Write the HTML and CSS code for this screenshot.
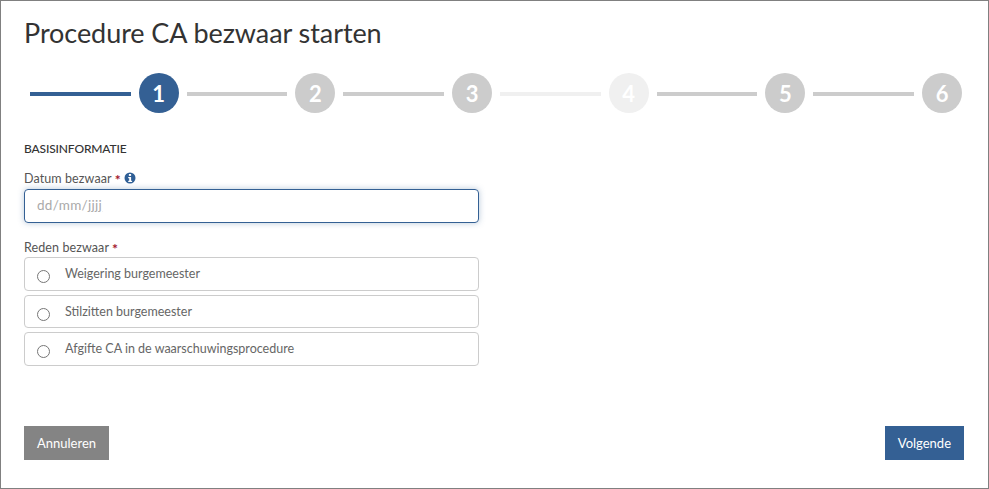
FILE: index.html
```html
<!DOCTYPE html>
<html lang="nl">
<head>
  <meta charset="UTF-8" />
  <meta name="viewport" content="width=device-width, initial-scale=1.0" />
  <title>Procedure CA bezwaar starten</title>
  <link rel="stylesheet" href="styles.css">
</head>
<body>
  <div class="modal">
    <h1 class="title">Procedure CA bezwaar starten</h1>

    <div class="steps">
      <span class="line active"></span>
      <span class="circle active">1</span>
      <span class="line"></span>
      <span class="circle">2</span>
      <span class="line"></span>
      <span class="circle">3</span>
      <span class="line faded"></span>
      <span class="circle faded">4</span>
      <span class="line"></span>
      <span class="circle">5</span>
      <span class="line"></span>
      <span class="circle">6</span>
    </div>

    <form class="form">
      <h2 class="section">BASISINFORMATIE</h2>

      <label class="label" for="datum">
        Datum bezwaar <span class="required">*</span>
        <svg class="info" viewBox="0 0 12 12" width="12" height="12" aria-hidden="true">
          <circle cx="6" cy="6" r="5.5" fill="#2f5f96"/>
          <rect x="4.9" y="2" width="2.2" height="1.9" fill="#fff"/>
          <path d="M4.2 5h2.9v3.7h1v1.2H4.2V8.7h1V6.2h-1z" fill="#fff"/>
        </svg>
      </label>
      <div class="date-input" id="datum">dd/mm/<span class="date-year">jjjj</span></div>

      <div class="label label-reason">Reden bezwaar <span class="required">*</span></div>
      <div class="options">
        <label class="option"><input type="radio" name="reden"><span>Weigering burgemeester</span></label>
        <label class="option option-short"><input type="radio" name="reden"><span>Stilzitten burgemeester</span></label>
        <label class="option"><input type="radio" name="reden"><span>Afgifte CA in de waarschuwingsprocedure</span></label>
      </div>
    </form>

    <div class="actions">
      <button type="button" class="btn btn-cancel">Annuleren</button>
      <button type="button" class="btn btn-next">Volgende</button>
    </div>
  </div>
</body>
</html>
```

FILE: styles.css
```css
* {
  box-sizing: border-box;
}
body {
  margin: 0;
  font-family: 'Lato', sans-serif;
  background: #fff;
  color: #333;
}
.modal {
  width: 989px;
  height: 489px;
  border: 1px solid #808080;
  padding: 0 24px 0 23px;
  display: flex;
  flex-direction: column;
}
.title {
  margin: 15px 0 0;
  font-size: 27px;
  line-height: 34px;
  font-weight: 400;
  letter-spacing: -0.07px;
  color: #333;
}
.steps {
  display: flex;
  align-items: center;
  gap: 8px;
  margin: 23px 2px 0 6px;
}
.line {
  flex: 1;
  height: 4px;
  margin-top: 2px;
  background: #ccc;
}
.line.active {
  background: #346094;
}
.line.faded {
  background: #f0f0f0;
}
.circle {
  width: 40px;
  height: 40px;
  flex: none;
  border-radius: 50%;
  background: #ccc;
  color: #fff;
  font-size: 22px;
  font-weight: 700;
  display: flex;
  align-items: center;
  justify-content: center;
}
.circle.active {
  background: #346094;
}
.circle.faded {
  background: #f0f0f0;
}
.form {
  width: 455px;
}
.section {
  margin: 28px 0 0;
  font-size: 12px;
  line-height: 16px;
  font-weight: 500;
  letter-spacing: -0.15px;
  color: #333;
}
.label {
  display: block;
  font-size: 12.5px;
  line-height: 16px;
  letter-spacing: 0.1px;
  color: #555;
  margin-top: 14px;
}
.label-reason {
  margin-top: 17px;
}
.required {
  color: #a3172c;
  font-size: 14px;
  font-weight: 700;
  line-height: 0;
  vertical-align: -2px;
}
.info {
  vertical-align: -1px;
}
.date-input {
  height: 34px;
  margin-top: 2px;
  padding-left: 12px;
  border: 1px solid #346094;
  border-radius: 4px;
  box-shadow: 0 0 6px rgba(52, 96, 148, 0.35);
  font-size: 13.5px;
  line-height: 31px;
  letter-spacing: 0.3px;
  color: #aaa;
}
.date-year {
  text-decoration: underline;
}
.options {
  display: flex;
  flex-direction: column;
  gap: 4px;
  margin-top: 1px;
}
.option {
  display: flex;
  align-items: center;
  height: 34px;
  padding-left: 12px;
  border: 1px solid #ccc;
  border-radius: 4px;
  font-size: 12.5px;
  color: #666;
}
.option-short {
  height: 33px;
}
.option input {
  width: 13px;
  height: 13px;
  margin: 5px 15px 0 0;
  flex: none;
}
.option span {
  margin-top: -1px;
}
.actions {
  display: flex;
  justify-content: space-between;
  margin-top: auto;
  margin-bottom: 28px;
}
.btn {
  height: 34px;
  padding: 0 13px;
  border: none;
  font-family: inherit;
  font-size: 13px;
  color: #fff;
  cursor: pointer;
}
.btn-cancel {
  background: #848484;
}
.btn-next {
  background: #346094;
}
```
